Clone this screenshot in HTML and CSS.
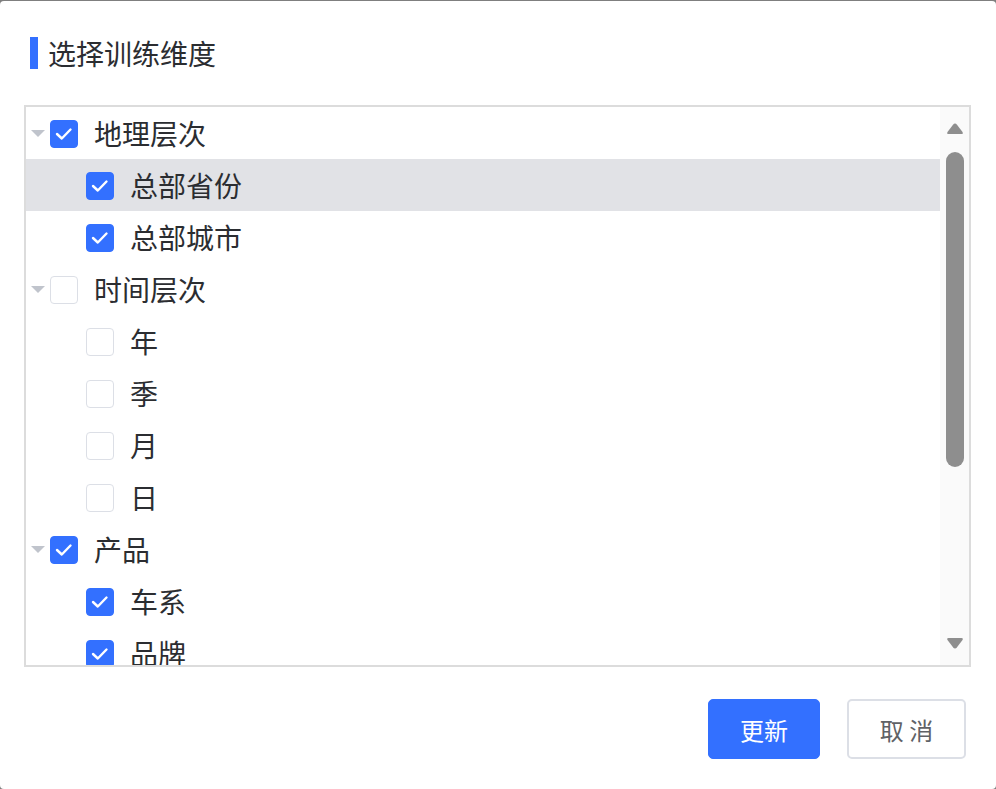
FILE: index.html
```html
<!DOCTYPE html>
<html lang="zh-CN">
<head>
<meta charset="utf-8">
<title>选择训练维度</title>
<link rel="stylesheet" href="styles.css">
</head>
<body>
<div class="dialog">
  <div class="title"><span class="bar"></span><span class="title-text">选择训练维度</span></div>
  <div class="tree-box">
    <div class="tree">
      <div class="row lvl1"><span class="caret"></span><span class="cb on"><svg viewBox="0 0 26 26"><path d="M6 13 L10.8 17.5 L19.5 8.5"/></svg></span><span class="label">地理层次</span></div>
      <div class="row lvl2 hover"><span class="cb on"><svg viewBox="0 0 26 26"><path d="M6 13 L10.8 17.5 L19.5 8.5"/></svg></span><span class="label">总部省份</span></div>
      <div class="row lvl2"><span class="cb on"><svg viewBox="0 0 26 26"><path d="M6 13 L10.8 17.5 L19.5 8.5"/></svg></span><span class="label">总部城市</span></div>
      <div class="row lvl1"><span class="caret"></span><span class="cb"></span><span class="label">时间层次</span></div>
      <div class="row lvl2"><span class="cb"></span><span class="label">年</span></div>
      <div class="row lvl2"><span class="cb"></span><span class="label">季</span></div>
      <div class="row lvl2"><span class="cb"></span><span class="label">月</span></div>
      <div class="row lvl2"><span class="cb"></span><span class="label">日</span></div>
      <div class="row lvl1"><span class="caret"></span><span class="cb on"><svg viewBox="0 0 26 26"><path d="M6 13 L10.8 17.5 L19.5 8.5"/></svg></span><span class="label">产品</span></div>
      <div class="row lvl2"><span class="cb on"><svg viewBox="0 0 26 26"><path d="M6 13 L10.8 17.5 L19.5 8.5"/></svg></span><span class="label">车系</span></div>
      <div class="row lvl2"><span class="cb on"><svg viewBox="0 0 26 26"><path d="M6 13 L10.8 17.5 L19.5 8.5"/></svg></span><span class="label">品牌</span></div>
    </div>
    <div class="scrollbar">
      <svg class="arrow" viewBox="0 0 18 13"><path d="M9 1.5 Q10 1.5 11 2.7 L16.5 10 Q17.5 12 15.5 12 L2.5 12 Q0.5 12 1.5 10 L7 2.7 Q8 1.5 9 1.5 Z"/></svg>
      <div class="thumb"></div>
      <svg class="arrow down" viewBox="0 0 18 13"><path d="M9 11.5 Q10 11.5 11 10.3 L16.5 3 Q17.5 1 15.5 1 L2.5 1 Q0.5 1 1.5 3 L7 10.3 Q8 11.5 9 11.5 Z"/></svg>
    </div>
  </div>
  <div class="footer">
    <button class="btn primary">更新</button>
    <button class="btn plain">取 消</button>
  </div>
</div>
</body>
</html>
```
FILE: styles.css
```css
html, body {
  margin: 0;
  padding: 0;
}
body {
  background: #7f7f7f;
  width: 996px;
  height: 789px;
  overflow: hidden;
  font-family: "Noto Sans CJK SC", "Noto Sans", sans-serif;
}
.dialog {
  margin-top: 1px;
  height: 788px;
  box-sizing: border-box;
  background: #fff;
  border-radius: 4px;
  padding: 36px 25px 0 24px;
}
.title {
  display: flex;
  align-items: center;
  height: 32px;
  margin-left: 6px;
}
.bar {
  width: 8px;
  height: 32px;
  background: #3370ff;
}
.title-text {
  margin-left: 10px;
  font-size: 28px;
  line-height: 32px;
  color: #2b2d31;
}
.tree-box {
  margin-top: 36px;
  height: 562px;
  box-sizing: border-box;
  border: 2px solid #dcdcdc;
  display: flex;
}
.tree {
  flex: 1;
  overflow: hidden;
}
.row {
  height: 52px;
  display: flex;
  align-items: center;
  box-sizing: border-box;
}
.row.lvl1 {
  padding-left: 5px;
}
.row.lvl2 {
  padding-left: 60px;
}
.row.hover {
  background: #e1e2e6;
}
.caret {
  width: 0;
  height: 0;
  border-left: 7px solid transparent;
  border-right: 7px solid transparent;
  border-top: 7px solid #c0c4cc;
  margin-right: 5px;
  margin-top: 1px;
}
.cb {
  width: 28px;
  height: 28px;
  box-sizing: border-box;
  border: 1px solid #dcdfe6;
  border-radius: 4px;
  background: #fff;
  flex: none;
  margin-top: 2px;
}
.cb.on {
  background: #3370ff;
  border-color: #3370ff;
}
.cb svg {
  display: block;
  width: 26px;
  height: 26px;
}
.cb svg path {
  fill: none;
  stroke: #fff;
  stroke-width: 2.4;
  stroke-linecap: round;
  stroke-linejoin: round;
}
.label {
  margin-left: 16px;
  font-size: 28px;
  color: #2b2d31;
  line-height: 32px;
}
.scrollbar {
  width: 29px;
  background: #fafafa;
  box-sizing: border-box;
  padding: 15px 5px 15px 6px;
  display: flex;
  flex-direction: column;
}
.arrow {
  width: 18px;
  height: 13px;
  display: block;
  fill: #8e8e8e;
}
.thumb {
  margin-top: 17px;
  width: 18px;
  height: 315px;
  border-radius: 9px;
  background: #8e8e8e;
}
.arrow.down {
  margin-top: auto;
}
.footer {
  display: flex;
  justify-content: flex-end;
  gap: 27px;
  margin-top: 32px;
  padding-right: 5px;
}
.btn {
  height: 60px;
  border-radius: 5px;
  font-family: "Noto Sans CJK SC", "Noto Sans", sans-serif;
  font-size: 24px;
  cursor: pointer;
  box-sizing: border-box;
}
.btn.primary {
  width: 112px;
  background: #3370ff;
  border: 1px solid #3370ff;
  color: #fff;
}
.btn.plain {
  width: 119px;
  background: #fff;
  border: 2px solid #dcdfe6;
  color: #606266;
}
```
